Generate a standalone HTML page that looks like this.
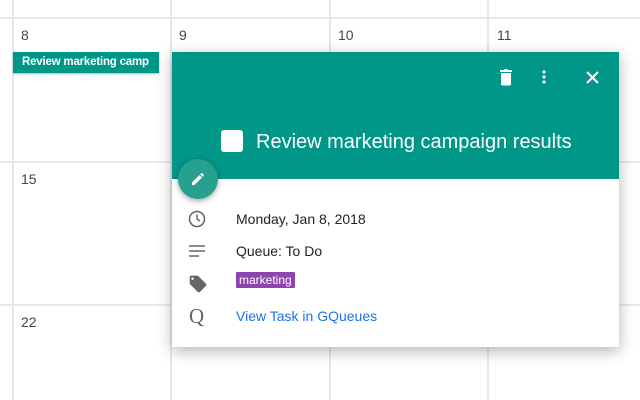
<!DOCTYPE html><html><head><style>
body{margin:0;width:640px;height:400px;overflow:hidden;background:#fff;font-family:"Liberation Sans",sans-serif;position:relative}
.v{position:absolute;top:0;bottom:0;width:2px;background:#e8e8e8}
.h{position:absolute;left:0;right:0;height:2px;background:#e8e8e8}
.n{position:absolute;font-size:14px;color:#444}
.pop{position:absolute;left:172px;top:52px;width:447px;height:295px;background:#fff;box-shadow:0 4px 14px rgba(0,0,0,.3)}
.hd{height:127px;background:#009688;position:relative}
.row{position:absolute;left:64px;font-size:14px;color:#222}
</style></head><body>
<div class="v" style="left:12px"></div><div class="v" style="left:170px"></div><div class="v" style="left:329px"></div><div class="v" style="left:487px"></div>
<div class="h" style="top:17px"></div><div class="h" style="top:161px"></div><div class="h" style="top:304px"></div>
<div class="n" style="left:21px;top:27px">8</div><div class="n" style="left:179px;top:27px">9</div><div class="n" style="left:338px;top:27px">10</div><div class="n" style="left:497px;top:27px">11</div>
<div class="n" style="left:21px;top:171px">15</div><div class="n" style="left:21px;top:314px">22</div>
<div style="position:absolute;left:13px;top:52px;width:146px;height:21px;background:#009688;box-shadow:0 1px 2px rgba(0,0,0,.3);color:#fff;font-size:11.5px;font-weight:bold;letter-spacing:-0.2px;line-height:21px;padding-left:9px;box-sizing:border-box;white-space:nowrap;overflow:hidden">Review marketing camp</div>
<div class="pop"><div class="hd">
<svg style="position:absolute;left:326px;top:16px" width="16" height="18" viewBox="0 0 16 18"><path d="M3 5h10v11a1.5 1.5 0 0 1-1.5 1.5h-7A1.5 1.5 0 0 1 3 16z M2 2h4l1-1h2l1 1h4v2H2z" fill="#fff"/></svg>
<svg style="position:absolute;left:370px;top:18px" width="4" height="14"><circle cx="2" cy="2" r="1.6" fill="#fff"/><circle cx="2" cy="7" r="1.6" fill="#fff"/><circle cx="2" cy="12" r="1.6" fill="#fff"/></svg>
<svg style="position:absolute;left:414px;top:19px" width="13" height="13"><path d="M1 1L12 12M12 1L1 12" stroke="#fff" stroke-width="2"/></svg>
<div style="position:absolute;left:49px;top:78px;width:22px;height:22px;background:#fff;border-radius:3px"></div>
<div style="position:absolute;left:84px;top:79px;color:#fff;font-size:20px">Review marketing campaign results</div>
</div>
<div style="position:absolute;left:6px;top:107px;width:40px;height:40px;border-radius:50%;background:#26a08f;box-shadow:0 2px 6px rgba(0,0,0,.35)">
<svg style="position:absolute;left:12px;top:12px" width="16" height="16" viewBox="0 0 24 24"><path d="M3 17.25V21h3.75L17.8 9.94l-3.750-3.75zM20.7 7.04a1 1 0 0 0 0-1.41l-2.34-2.34a1 1 0 0 0-1.41 0l-1.830 1.83 3.75 3.75z" fill="#fff"/></svg></div>
<svg style="position:absolute;left:16px;top:158px" width="18" height="18" viewBox="0 0 18 18"><circle cx="9" cy="9" r="7.5" fill="none" stroke="#666" stroke-width="1.6"/><path d="M9 4.5V9l3 2" fill="none" stroke="#666" stroke-width="1.5"/></svg>
<div class="row" style="top:159px">Monday, Jan 8, 2018</div>
<svg style="position:absolute;left:17px;top:193px" width="16" height="12"><path d="M0 1h16M0 6h16M0 11h10" stroke="#666" stroke-width="1.5"/></svg>
<div class="row" style="top:191px">Queue: To Do</div>
<svg style="position:absolute;left:16px;top:222px" width="20" height="20" viewBox="0 0 24 24"><path d="M21.4 11.6l-9-9C12.05 2.25 11.55 2 11 2H4c-1.1 0-2 .9-2 2v7c0 .55.22 1.05.59 1.42l9 9c.36.36.86.58 1.41.58s1.05-.22 1.41-.59l7-7c.37-.36.59-.86.59-1.41s-.23-1.06-.6-1.4zM5.5 7C4.67 7 4 6.33 4 5.5S4.670 4 5.5 4 7 4.67 7 5.5 6.33 7 5.5 7z" fill="#666"/></svg>
<div style="position:absolute;left:64px;top:220px;background:#8e44ad;color:#fff;font-size:12px;padding:1px 3px;border-radius:1px">marketing</div>
<div style="position:absolute;left:17px;top:252px;font-family:'Liberation Serif',serif;font-size:21px;color:#666">Q</div>
<div class="row" style="top:256px;color:#1a73e8">View Task in GQueues</div>
</div>
</body></html>
